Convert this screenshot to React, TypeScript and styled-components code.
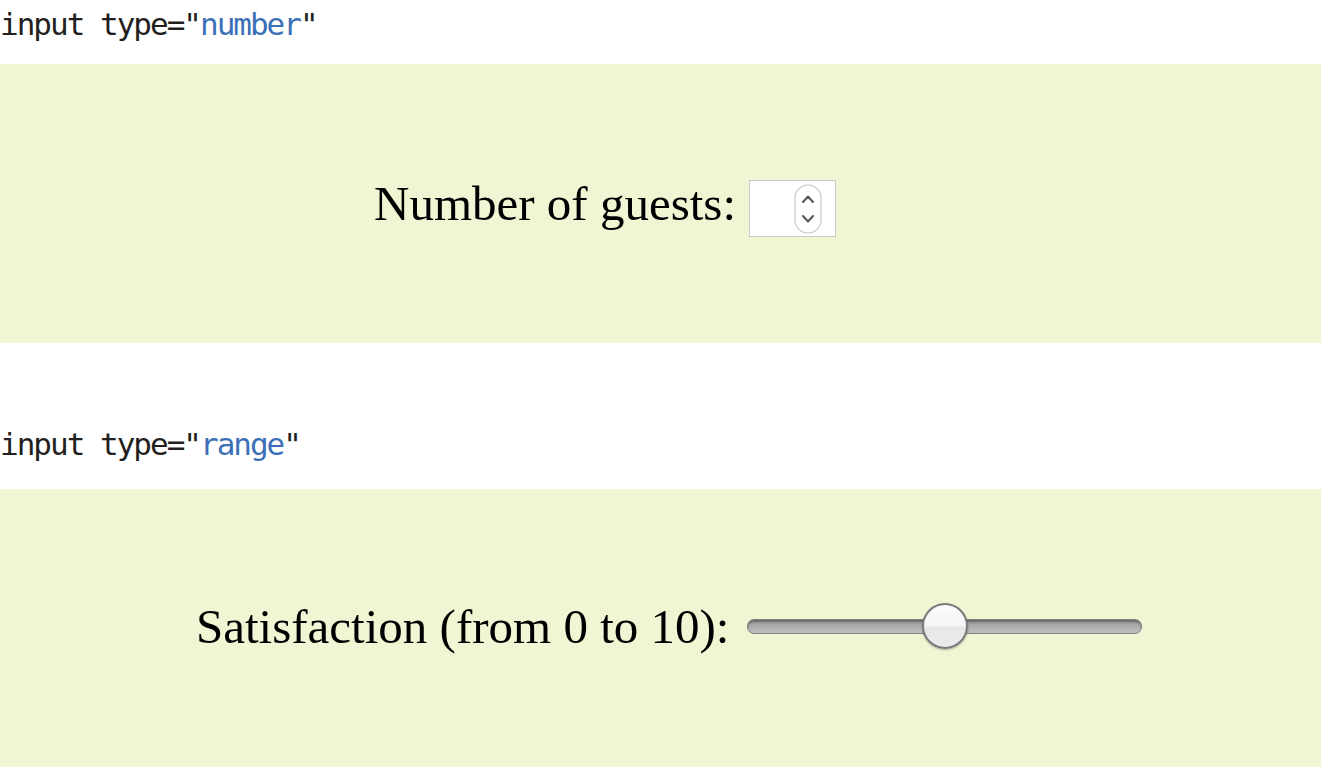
import React from "react";
import styled, { createGlobalStyle } from "styled-components";

const Global = createGlobalStyle`
  html, body { margin: 0; padding: 0; background: #ffffff; }
  body { width: 1321px; overflow: hidden; }
`;

const Page = styled.div`
  display: flex;
  flex-direction: column;
  width: 1321px;
`;

const Header = styled.div<{ $top: number; $bottom: number }>`
  margin-top: ${(p) => p.$top}px;
  padding: 4px 0 ${(p) => p.$bottom}px 0;
  font-family: "DejaVu Sans Mono", "Liberation Mono", monospace;
  font-size: 31px;
  letter-spacing: -2px;
  line-height: 40px;
  color: #231f20;
  white-space: pre;
`;

const Keyword = styled.span`
  color: #3b70b7;
`;

const Panel = styled.div<{ $indent: number; $height: number; $shift: number }>`
  display: flex;
  align-items: center;
  height: ${(p) => p.$height}px;
  padding-left: ${(p) => p.$indent}px;
  padding-top: ${(p) => Math.max(0, p.$shift * 2)}px;
  padding-bottom: ${(p) => Math.max(0, -p.$shift * 2)}px;
  background: #eff6d3;
  box-sizing: border-box;
`;

const Label = styled.span`
  font-family: "Liberation Serif", "Times New Roman", serif;
  font-size: 49px;
  color: #000;
  line-height: 1;
  white-space: pre;
`;

const NumberBox = styled.div`
  display: flex;
  align-items: center;
  justify-content: flex-end;
  width: 87px;
  height: 57px;
  box-sizing: border-box;
  border: 1px solid #c9c9c9;
  background: #fff;
  padding-right: 13px;
  margin-left: 13px;
  margin-top: 10px;
`;

const SliderTrack = styled.div`
  position: relative;
  width: 395px;
  height: 15px;
  margin-left: 18px;
  border-radius: 7px;
  box-sizing: border-box;
  border: 1px solid #808080;
  background: linear-gradient(#8e8e8e 0%, #aaaaaa 40%, #c0c0c0 100%);
  box-shadow: inset 0 2px 2px rgba(0, 0, 0, 0.28);
`;

const Thumb = styled.div`
  position: absolute;
  top: 50%;
  width: 46px;
  height: 46px;
  border-radius: 50%;
  box-sizing: border-box;
  border: 2px solid #7a7a7a;
  background: linear-gradient(#fbfbfb 0%, #f4f4f6 50%, #e6e6e8 52%, #ececee 100%);
  box-shadow: 0 1px 2px rgba(0, 0, 0, 0.3);
  transform: translate(-50%, -50%);
`;

const Spinner = () => (
  <svg width="28" height="50" viewBox="0 0 28 50">
    <rect x="1" y="1" width="26" height="48" rx="13" ry="13" fill="#fff" stroke="#d4d4d4" strokeWidth="1.5" />
    <path d="M9 18 L14 12.5 L19 18" fill="none" stroke="#555" strokeWidth="2" strokeLinecap="round" strokeLinejoin="round" />
    <path d="M9 32 L14 37.5 L19 32" fill="none" stroke="#555" strokeWidth="2" strokeLinecap="round" strokeLinejoin="round" />
  </svg>
);

export default function App() {
  const value = 5;
  const pct = value / 10;
  return (
    <Page>
      <Global />
      <Header $top={0} $bottom={20}>
        input type="<Keyword>number</Keyword>"
      </Header>
      <Panel $indent={374} $height={279} $shift={0}>
        <Label>Number of guests:</Label>
        <NumberBox>
          <Spinner />
        </NumberBox>
      </Panel>
      <Header $top={77} $bottom={25}>
        input type="<Keyword>range</Keyword>"
      </Header>
      <Panel $indent={196} $height={278} $shift={-2}>
        <Label>Satisfaction (from 0 to {10}):</Label>
        <SliderTrack aria-valuenow={value}>
          <Thumb style={{ left: `${pct * 100}%` }} />
        </SliderTrack>
      </Panel>
    </Page>
  );
}
